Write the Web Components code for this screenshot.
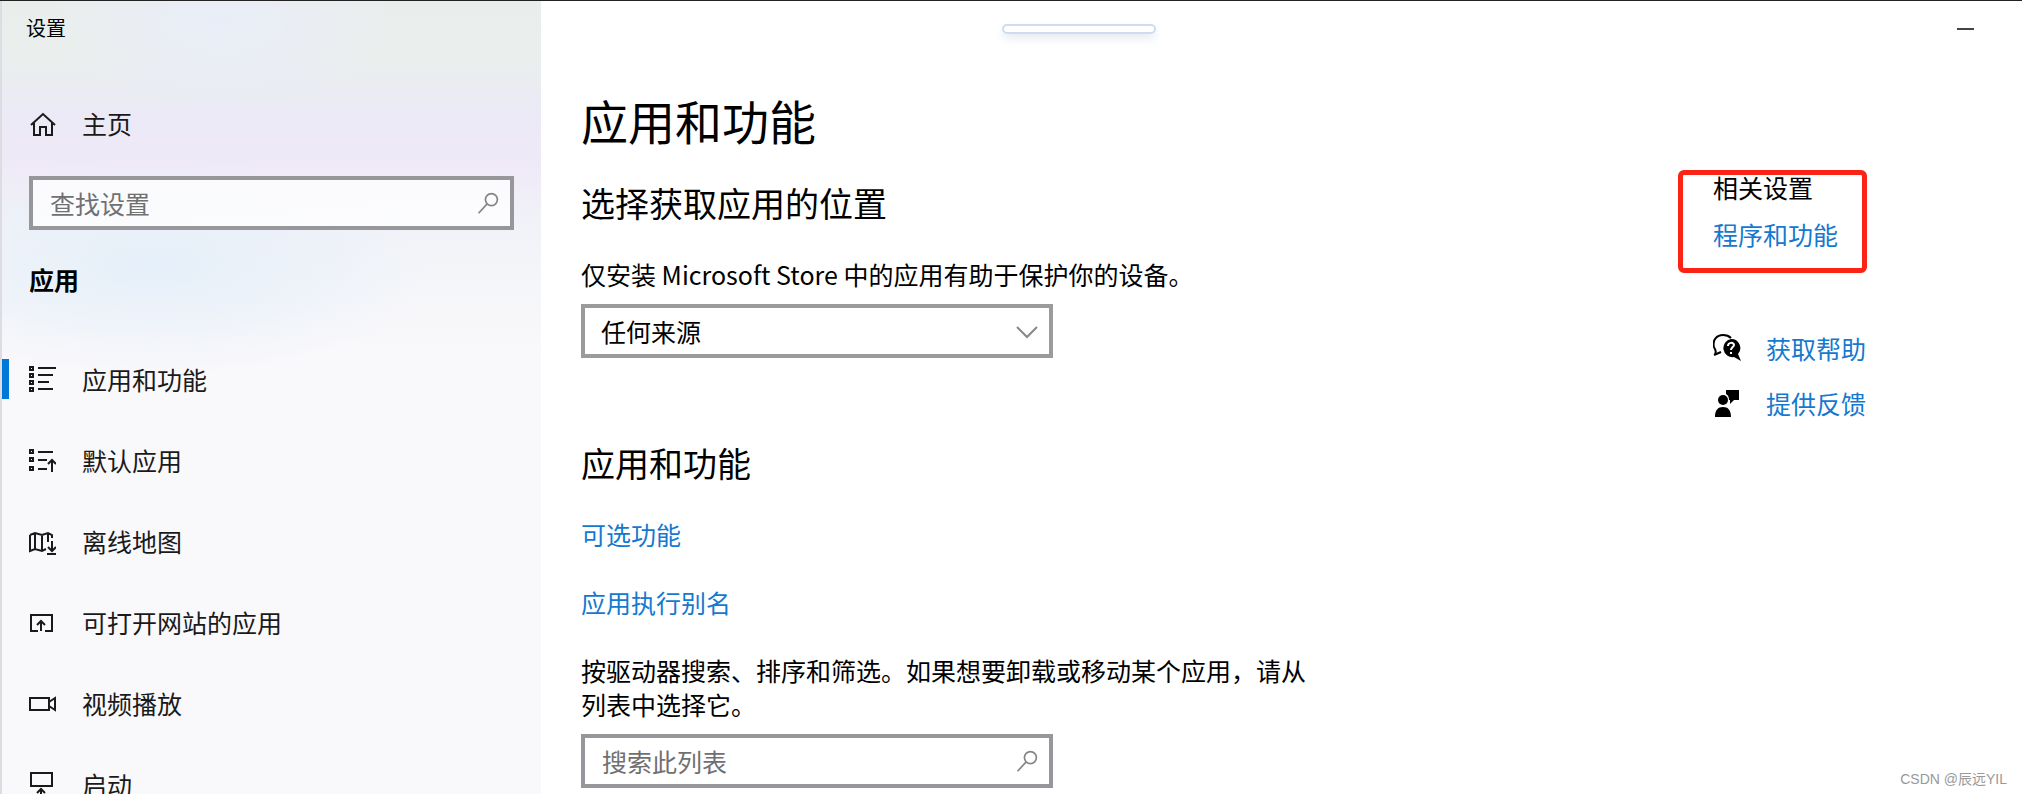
<!DOCTYPE html>
<html lang="zh-CN">
<head>
<meta charset="utf-8">
<meta name="viewport" content="width=device-width, initial-scale=1">
<title>设置</title>
<style>
    body {
        margin: 0;
        background: #fff;
        color: #000;
        font-family: "Noto Sans CJK SC", sans-serif;
        font-size: 25px;
        line-height: 34px;
    }
</style>
</head>
<body>
<settings-window>
    <settings-sidebar slot="sidebar" heading="设置" group="应用">
        <nav-item slot="home" icon="home">主页</nav-item>
        <search-box slot="search" label="查找设置"></search-box>
        <nav-item icon="apps" active>应用和功能</nav-item>
        <nav-item icon="defaults">默认应用</nav-item>
        <nav-item icon="maps">离线地图</nav-item>
        <nav-item icon="website">可打开网站的应用</nav-item>
        <nav-item icon="video">视频播放</nav-item>
        <nav-item icon="startup">启动</nav-item>
    </settings-sidebar>
    <apps-page></apps-page>
    <related-panel slot="related"></related-panel>
    <water-mark slot="mark">CSDN @辰远YIL</water-mark>
</settings-window>

<script>
const ICONS = {
    home: '<path d="M3 16 15 5l12 11M6 14v12h6v-8h6v8h6V14"/>',
    search: '<circle cx="18" cy="10" r="7"/><path d="M13 15 3 26"/>',
    chevron: '<path d="m4 10 10 10 10-10"/>',
    apps: '<path d="M2 2h3v3H2zM2 9h3v3H2zM2 16h3v3H2zM2 23h3v3H2z"/><path d="M10 3h18M10 10h15M10 17h11M10 24h15"/>',
    defaults: '<path d="M2 4h3v3H2zM2 12h3v3H2zM2 21h3v3H2z"/><path d="M10 6h15M10 14h9M10 23h9M24 26V14M20 18l4-4 4 4"/>',
    maps: '<path d="M2 8l5-2 7 2 6-2 4 2v3M2 8v16l5-2 7 2 4-2M7 6v16M14 8v16M20 6v9M24 14v9M20 20l4 4 4-4M19 27h9"/>',
    website: '<path d="M10 23H3V7h21v16h-7M13 23V13M9 17l4-4 4 4"/>',
    video: '<path d="M2 9h19v12H2zM21 13l6-4v12l-6-4"/>',
    startup: '<path d="M3 3h21v13H3zM13 28V19M9 23l4-4 4 4"/>',
    help: '<path d="M2 20c2-3 0-4-1-7-2-7 3-12 9-12 4 0 6 1 8 3"/><path d="m1 21 7-3"/><path fill="currentColor" stroke="none" d="M18 5a9 9 0 1 0 3 18l7 4-3-7A9 9 0 0 0 18 5z"/><path stroke="#fff" d="M15 12c0-4 6-4 6-1 0 2-3 2-3 5M18 18v2"/>',
    feedback: '<g fill="currentColor" stroke="none"><circle cx="10" cy="11" r="5"/><path d="M2 28c0-7 3-10 8-10s8 3 8 10zM13 1h13v10h-5l-4 4v-4h-1c0-3-1-5-3-6z"/></g>'
};

class WinIcon extends HTMLElement {
    connectedCallback() {
        if (this.shadowRoot) return;
        this.attachShadow({ mode: 'open' }).innerHTML = `
            <style>
                :host {
                    display: block;
                    flex: none;
                    width: 28px;
                    height: 28px;
                }
                svg {
                    display: block;
                    width: 100%;
                    height: 100%;
                    fill: none;
                    stroke: currentColor;
                    stroke-width: 2;
                }
            </style>
            <svg viewBox="0 0 28 28" aria-hidden="true">${ICONS[this.getAttribute('name')]}</svg>
        `;
    }
}

class SettingsWindow extends HTMLElement {
    constructor() {
        super();
        this.attachShadow({ mode: 'open' }).innerHTML = `
            <style>
                :host {
                    display: flex;
                    position: relative;
                    box-sizing: border-box;
                    height: 100vh;
                    overflow: hidden;
                    border-top: 1px solid #222;
                }
                .main {
                    flex: 1;
                    min-width: 0;
                }
                .caption {
                    display: flex;
                    align-items: center;
                    height: 55px;
                }
                .grip {
                    box-sizing: border-box;
                    width: 154px;
                    height: 10px;
                    margin: 0 auto 0 461px;
                    border: 2px solid #d0dbf0;
                    border-radius: 5px;
                    box-shadow: 0 5px 8px #e8ecf0;
                }
                button {
                    width: 60px;
                    height: 52px;
                    margin-right: 27px;
                    padding: 0;
                    border: 0;
                    background: none;
                }
                button::before {
                    content: "";
                    display: block;
                    width: 17px;
                    height: 2px;
                    margin: auto;
                    background: #444;
                }
                .content {
                    display: flex;
                    padding-left: 40px;
                }
                .page {
                    flex: 1;
                    min-width: 0;
                }
            </style>
            <slot name="sidebar"></slot>
            <div class="main">
                <div class="caption">
                    <div class="grip"></div>
                    <button type="button" aria-label="最小化"></button>
                </div>
                <div class="content">
                    <main class="page"><slot></slot></main>
                    <slot name="related"></slot>
                </div>
            </div>
            <slot name="mark"></slot>
        `;
    }
}

class SettingsSidebar extends HTMLElement {
    connectedCallback() {
        if (this.shadowRoot) return;
        this.attachShadow({ mode: 'open' }).innerHTML = `
            <style>
                :host {
                    display: block;
                    flex: none;
                    box-sizing: border-box;
                    width: 541px;
                    border-left: 2px solid #dcdce2;
                    background:
                        radial-gradient(ellipse 280px 110px at 150px 265px, #e5eff9, transparent),
                        radial-gradient(ellipse 180px 90px at 220px 20px, #e9edf8, transparent),
                        linear-gradient(#e9eeec, #eaeeed 60px, #ebeaf6 110px, #efe9f7 160px, #f1f2f8 220px, #f5f6f9 290px, #f9f8fb 350px);
                }
                .title {
                    padding: 10px 24px 0;
                    font-size: 20px;
                }
                .home {
                    margin-top: 37px;
                }
                .search {
                    margin: 13px 27px 0;
                }
                h2 {
                    margin: 32px 27px 42px;
                    font-size: 25px;
                    line-height: 34px;
                }
            </style>
            <div class="title">${this.getAttribute('heading')}</div>
            <div class="home"><slot name="home"></slot></div>
            <div class="search"><slot name="search"></slot></div>
            <h2>${this.getAttribute('group')}</h2>
            <nav><slot></slot></nav>
        `;
    }
}

class NavItem extends HTMLElement {
    connectedCallback() {
        if (this.shadowRoot) return;
        this.attachShadow({ mode: 'open' }).innerHTML = `
            <style>
                :host {
                    display: block;
                }
                a {
                    display: flex;
                    align-items: center;
                    gap: 26px;
                    height: 81px;
                    color: #1a1a1a;
                    text-decoration: none;
                }
                a::before {
                    content: "";
                    width: 7px;
                    height: 40px;
                    margin-right: -7px;
                }
                :host([active]) a::before {
                    background: #0078d7;
                }
            </style>
            <a href="#"><win-icon name="${this.getAttribute('icon')}"></win-icon><span><slot></slot></span></a>
        `;
    }
}

class SearchBox extends HTMLElement {
    connectedCallback() {
        if (this.shadowRoot) return;
        const label = this.getAttribute('label');
        this.attachShadow({ mode: 'open' }).innerHTML = `
            <style>
                :host {
                    display: flex;
                    align-items: center;
                    box-sizing: border-box;
                    height: 54px;
                    padding: 0 10px 0 17px;
                    border: 4px solid #97979b;
                    background: rgba(255, 255, 255, 0.75);
                }
                input {
                    flex: 1;
                    min-width: 0;
                    padding: 0;
                    border: 0;
                    outline: 0;
                    background: none;
                    font: inherit;
                }
                input::placeholder {
                    color: #707070;
                    opacity: 1;
                }
                win-icon {
                    width: 24px;
                    height: 24px;
                    color: #858585;
                }
            </style>
            <input type="text" placeholder="${label}" aria-label="${label}">
            <win-icon name="search"></win-icon>
        `;
    }
}

class SourceSelect extends HTMLElement {
    constructor() {
        super();
        this.attachShadow({ mode: 'open' }).innerHTML = `
            <style>
                :host {
                    display: grid;
                    align-items: center;
                    height: 54px;
                }
                select, win-icon {
                    grid-area: 1 / 1;
                }
                select {
                    appearance: none;
                    box-sizing: border-box;
                    width: 100%;
                    height: 54px;
                    padding: 0 48px 0 16px;
                    border: 4px solid #9b9b9b;
                    border-radius: 0;
                    background: #fff;
                    color: #000;
                    font: inherit;
                }
                win-icon {
                    justify-self: end;
                    margin-right: 12px;
                    color: #888;
                    pointer-events: none;
                }
            </style>
            <select aria-label="选择获取应用的位置">
                <option>任何来源</option>
            </select>
            <win-icon name="chevron"></win-icon>
        `;
    }
}

class TextLink extends HTMLElement {
    constructor() {
        super();
        this.attachShadow({ mode: 'open' }).innerHTML = `
            <style>
                :host {
                    display: block;
                }
                a {
                    color: #1479cf;
                    text-decoration: none;
                }
                a:hover {
                    color: #666;
                }
            </style>
            <a href="#"><slot></slot></a>
        `;
    }
}

class AppsPage extends HTMLElement {
    constructor() {
        super();
        this.attachShadow({ mode: 'open' }).innerHTML = `
            <style>
                :host {
                    display: block;
                }
                h1, h2, p {
                    margin: 0;
                    font-weight: 400;
                }
                h1 {
                    margin-top: 32px;
                    font-size: 47px;
                    line-height: 64px;
                }
                h2 {
                    margin: 27px 0 30px;
                    font-size: 34px;
                    line-height: 48px;
                }
                .features {
                    margin-top: 81px;
                }
                source-select, search-box {
                    max-width: 472px;
                    margin-top: 13px;
                }
                text-link {
                    margin-bottom: 34px;
                }
                .hint {
                    max-width: 740px;
                }
            </style>
            <h1>应用和功能</h1>
            <h2>选择获取应用的位置</h2>
            <p>仅安装 Microsoft Store 中的应用有助于保护你的设备。</p>
            <source-select></source-select>
            <h2 class="features">应用和功能</h2>
            <text-link>可选功能</text-link>
            <text-link>应用执行别名</text-link>
            <p class="hint">按驱动器搜索、排序和筛选。如果想要卸载或移动某个应用，请从列表中选择它。</p>
            <search-box label="搜索此列表"></search-box>
        `;
    }
}

class RelatedPanel extends HTMLElement {
    constructor() {
        super();
        this.attachShadow({ mode: 'open' }).innerHTML = `
            <style>
                :host {
                    display: block;
                    flex: none;
                    width: 344px;
                    margin-top: 114px;
                }
                .related {
                    box-sizing: border-box;
                    width: 189px;
                    padding: 0 0 21px 30px;
                    border: 5px solid #fa2316;
                    border-radius: 6px;
                    line-height: 25px;
                }
                h3 {
                    margin: 0 0 22px;
                    font-size: 25px;
                    font-weight: 400;
                }
                .help {
                    display: grid;
                    grid-template-columns: 28px auto;
                    align-items: center;
                    gap: 21px 25px;
                    margin: 58px 0 0 35px;
                }
            </style>
            <div class="related">
                <h3>相关设置</h3>
                <text-link>程序和功能</text-link>
            </div>
            <div class="help">
                <win-icon name="help"></win-icon><text-link>获取帮助</text-link>
                <win-icon name="feedback"></win-icon><text-link>提供反馈</text-link>
            </div>
        `;
    }
}

class WaterMark extends HTMLElement {
    constructor() {
        super();
        this.attachShadow({ mode: 'open' }).innerHTML = `
            <style>
                :host {
                    position: absolute;
                    right: 15px;
                    bottom: 5px;
                    color: #999;
                    font: 14px/20px "Liberation Sans", "Noto Sans CJK SC", sans-serif;
                }
            </style>
            <slot></slot>
        `;
    }
}

customElements.define('win-icon', WinIcon);
customElements.define('text-link', TextLink);
customElements.define('search-box', SearchBox);
customElements.define('source-select', SourceSelect);
customElements.define('nav-item', NavItem);
customElements.define('settings-sidebar', SettingsSidebar);
customElements.define('apps-page', AppsPage);
customElements.define('related-panel', RelatedPanel);
customElements.define('water-mark', WaterMark);
customElements.define('settings-window', SettingsWindow);
</script>
</body>
</html>
